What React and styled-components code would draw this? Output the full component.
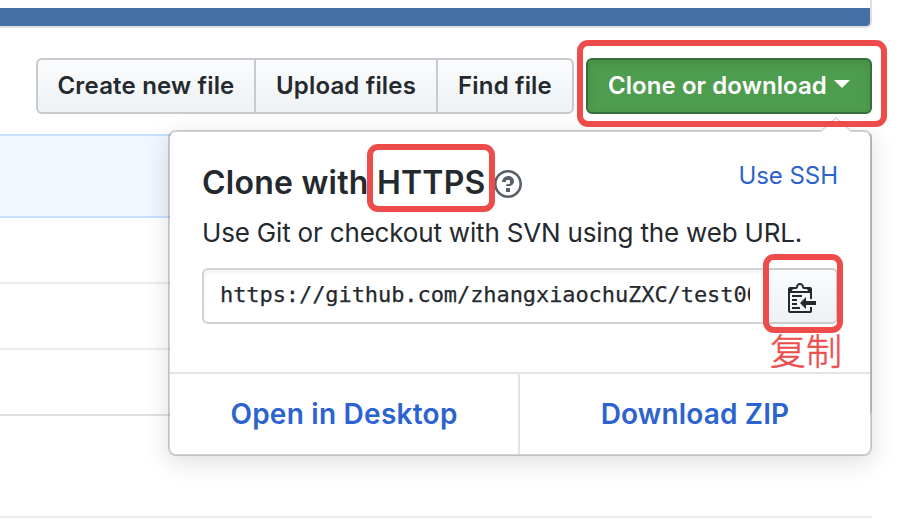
import React from 'react';
import styled, { createGlobalStyle, css } from 'styled-components';

const GlobalStyle = createGlobalStyle`
  * { box-sizing: border-box; }
  body {
    margin: 0;
    background: #fff;
    color: #24292e;
    font-family: Inter, 'Liberation Sans', sans-serif;
    overflow: hidden;
  }
`;

const Page = styled.div`
  position: relative;
  width: 910px;
  height: 526px;
  overflow: hidden;
  background: #fff;
`;

const Repository = styled.main`
  width: 872px;
`;

const LanguageBar = styled.div`
  height: 28px;
  border: 2px solid #dfe0e2;
  border-width: 0 2px 2px 0;
  border-radius: 0 0 6px 0;
  background: linear-gradient(#fff 8px, #4471a3 8px);
`;

const Toolbar = styled.div`
  display: flex;
  justify-content: flex-end;
  gap: 12px;
  margin-top: 30px;
  height: 56px;
`;

const ButtonGroup = styled.div`
  display: flex;
  width: 538px;
`;

const buttonFace = css`
  border: 2px solid #c8cacd;
  background: linear-gradient(#fafbfc, #eff3f6 90%);
  color: #24292e;
`;

const Button = styled.button`
  ${buttonFace}
  flex: none;
  width: ${(p) => p.$width}px;
  padding: 0 0 2px;
  border-right-width: ${(p) => (p.$last ? 2 : 0)}px;
  border-radius: ${(p) => (p.$first ? '6px 0 0 6px' : p.$last ? '0 6px 6px 0' : 0)};
  font: 600 24px Inter, sans-serif;
  letter-spacing: 0.18px;
  white-space: nowrap;
`;

const CloneButton = styled.button`
  display: flex;
  align-items: center;
  width: 286px;
  padding: 0 0 2px 20px;
  border: 2px solid #366e3c;
  border-radius: 6px;
  background: #4e9c4e;
  box-shadow: inset 0 4px 8px rgba(27, 60, 30, 0.15);
  color: #fff;
  font: 600 24px Inter, sans-serif;
  letter-spacing: 0.07px;
  white-space: nowrap;
`;

const Caret = styled.svg`
  width: 16px;
  height: 8px;
  margin: 0 0 2px 7px;
`;

const FileTable = styled.div`
  margin-top: 20px;
  height: 282px;
  border-right: 2px solid #dfe2e5;
  border-bottom: 2px solid #dfe2e5;
  border-radius: 0 0 6px 0;
`;

const CommitRow = styled.div`
  height: 84px;
  border: 2px solid #c8e1ff;
  border-width: 2px 0;
  background: #f2f7ff;
`;

const FileRow = styled.div`
  height: ${(p) => p.$height}px;
  border-bottom: 2px solid #eaecef;
`;

const FooterRule = styled.div`
  margin-top: 100px;
  height: 2px;
  background: #eaecef;
`;

const Popover = styled.section`
  position: absolute;
  left: 168px;
  top: 130px;
  width: 704px;
  height: 326px;
  display: flex;
  flex-direction: column;
  background: #fff;
  background-clip: padding-box;
  border: 2px solid rgba(27, 31, 35, 0.2);
  border-radius: 8px;
  box-shadow: 0 6px 24px rgba(27, 31, 35, 0.15);
`;

const PopoverArrow = styled.svg`
  position: absolute;
  left: 649px;
  top: -16px;
  width: 34px;
  height: 17px;
`;

const PopoverBody = styled.div`
  flex: 1;
  padding: 30px 32px 0;
`;

const TitleRow = styled.div`
  display: flex;
  align-items: flex-start;
  height: 48px;
`;

const Title = styled.h2`
  margin: 0;
  padding-top: 1px;
  font-size: 32px;
  line-height: 40px;
  font-weight: 600;
  letter-spacing: 0.24px;
  white-space: nowrap;
`;

const HelpIcon = styled.svg`
  width: 28px;
  height: 32px;
  margin: 6px 0 0 8px;
`;

const ModeLink = styled.a`
  margin-left: auto;
  color: #2c63ce;
  font-size: 24px;
  line-height: 28px;
  letter-spacing: -0.05px;
  white-space: nowrap;
`;

const Description = styled.p`
  margin: 3px 0 0;
  font-size: 26px;
  line-height: 40px;
  letter-spacing: -0.18px;
  white-space: nowrap;
`;

const UrlGroup = styled.div`
  display: flex;
  width: 636px;
  height: 56px;
  margin-top: 15px;
`;

const UrlField = styled.div`
  width: 564px;
  padding: 0 16px;
  border: 2px solid #d1d5da;
  border-right: 0;
  border-radius: 6px 0 0 6px;
  box-shadow: inset 0 2px 4px rgba(27, 31, 35, 0.07);
`;

const Url = styled.div`
  width: 530px;
  overflow: hidden;
  font: 22px/50px 'DejaVu Sans Mono', monospace;
  letter-spacing: -0.08px;
  -webkit-text-stroke: 0.25px #24292e;
  white-space: nowrap;
`;

const CopyButton = styled.button`
  ${buttonFace}
  display: flex;
  align-items: center;
  width: 72px;
  padding: 2px 0 0 20px;
  border-radius: 0 6px 6px 0;
`;

const Actions = styled.div`
  display: grid;
  grid-template-columns: 348px 352px;
  height: 82px;
  border-top: 2px solid #e1e4e8;
`;

const Action = styled.a`
  display: flex;
  align-items: center;
  justify-content: center;
  padding-bottom: 1px;
  border-left: ${(p) => (p.$divided ? '2px solid #e1e4e8' : 0)};
  color: #2c63ce;
  font-size: 28px;
  font-weight: 600;
  letter-spacing: ${(p) => p.$tracking}px;
  white-space: nowrap;
`;

const Highlight = styled.div`
  position: absolute;
  left: ${(p) => p.$x}px;
  top: ${(p) => p.$y}px;
  width: ${(p) => p.$w}px;
  height: ${(p) => p.$h}px;
  border: 6px solid #ee4b4b;
  border-radius: 11px;
  pointer-events: none;
`;

const Note = styled.span`
  position: absolute;
  left: 770px;
  top: 329px;
  color: #ee4b4b;
  font: 300 36px/40px 'Noto Sans CJK SC', sans-serif;
  -webkit-text-stroke: 0.5px #ee4b4b;
  white-space: nowrap;
`;

function ClipboardIcon() {
  return (
    <svg width="28" height="32" viewBox="0 0 14 16" fill="#24292e">
      <path d="M2 13h4v1H2v-1zm5-6H2v1h5V7zm2 3V8l-3 3 3 3v-2h5v-2H9zM4.500 9H2v1h2.500V9zM2 12h2.500v-1H2v1zm9 1h1v2c-.020.280-.110.520-.300.700-.190.180-.420.280-.700.300H1c-.550 0-1-.450-1-1V4c0-.550.450-1 1-1h3c0-1.110.890-2 2-2 1.110 0 2 .890 2 2h3c.550 0 1 .450 1 1v5h-1V6H1v9h10v-2zM2 5h8c0-.550-.450-1-1-1H8c-.550 0-1-.450-1-1s-.450-1-1-1-1 .450-1 1-.450 1-1 1H3c-.550 0-1 .450-1 1z" />
    </svg>
  );
}

export default function App() {
  return (
    <Page>
      <GlobalStyle />
      <Repository>
        <LanguageBar />
        <Toolbar>
          <ButtonGroup>
            <Button $width={218} $first>Create new file</Button>
            <Button $width={182}>Upload files</Button>
            <Button $width={138} $last>Find file</Button>
          </ButtonGroup>
          <CloneButton>
            Clone or download
            <Caret viewBox="0 0 16 8"><path d="M0 0h16L8 8z" fill="#fff" /></Caret>
          </CloneButton>
        </Toolbar>
        <FileTable>
          <CommitRow />
          <FileRow $height={66} />
          <FileRow $height={66} />
        </FileTable>
        <FooterRule />
      </Repository>

      <Popover>
        <PopoverArrow viewBox="0 0 34 17">
          <path d="M1 17L17 2l16 15z" fill="#fff" />
          <path d="M1.500 15.500L17 2l15.500 13.500" fill="none" stroke="#d8d8da" strokeWidth="1.500" />
        </PopoverArrow>
        <PopoverBody>
          <TitleRow>
            <Title>Clone with HTTPS</Title>
            <HelpIcon viewBox="0 0 14 16">
              <path fill="#586069" fillRule="evenodd" d="M6 10h2v2H6v-2zm4-3.500C10 8.640 8 9 8 9H6c0-.550.450-1 1-1h.500c.280 0 .500-.220.500-.500v-1c0-.280-.220-.500-.500-.500h-1c-.280 0-.500.220-.500.500V7H4c0-1.500 1.500-3 3-3s3 1 3 2.500zM7 2.300c3.140 0 5.700 2.560 5.700 5.700s-2.560 5.700-5.700 5.700A5.710 5.710 0 0 1 1.300 8c0-3.140 2.560-5.700 5.700-5.700zM7 1C3.140 1 0 4.140 0 8s3.140 7 7 7 7-3.140 7-7-3.140-7-7-7z" />
            </HelpIcon>
            <ModeLink>Use SSH</ModeLink>
          </TitleRow>
          <Description>Use Git or checkout with SVN using the web URL.</Description>
          <UrlGroup>
            <UrlField><Url>https://github.com/zhangxiaochuZXC/test007.git</Url></UrlField>
            <CopyButton aria-label="Copy"><ClipboardIcon /></CopyButton>
          </UrlGroup>
        </PopoverBody>
        <Actions>
          <Action $tracking={0.25}>Open in Desktop</Action>
          <Action $tracking={0.15} $divided>Download ZIP</Action>
        </Actions>
      </Popover>

      <Highlight $x={577} $y={40} $w={310} $h={87} />
      <Highlight $x={367} $y={144} $w={128} $h={68} />
      <Highlight $x={763} $y={254} $w={80} $h={79} />
      <Note>复制</Note>
    </Page>
  );
}
